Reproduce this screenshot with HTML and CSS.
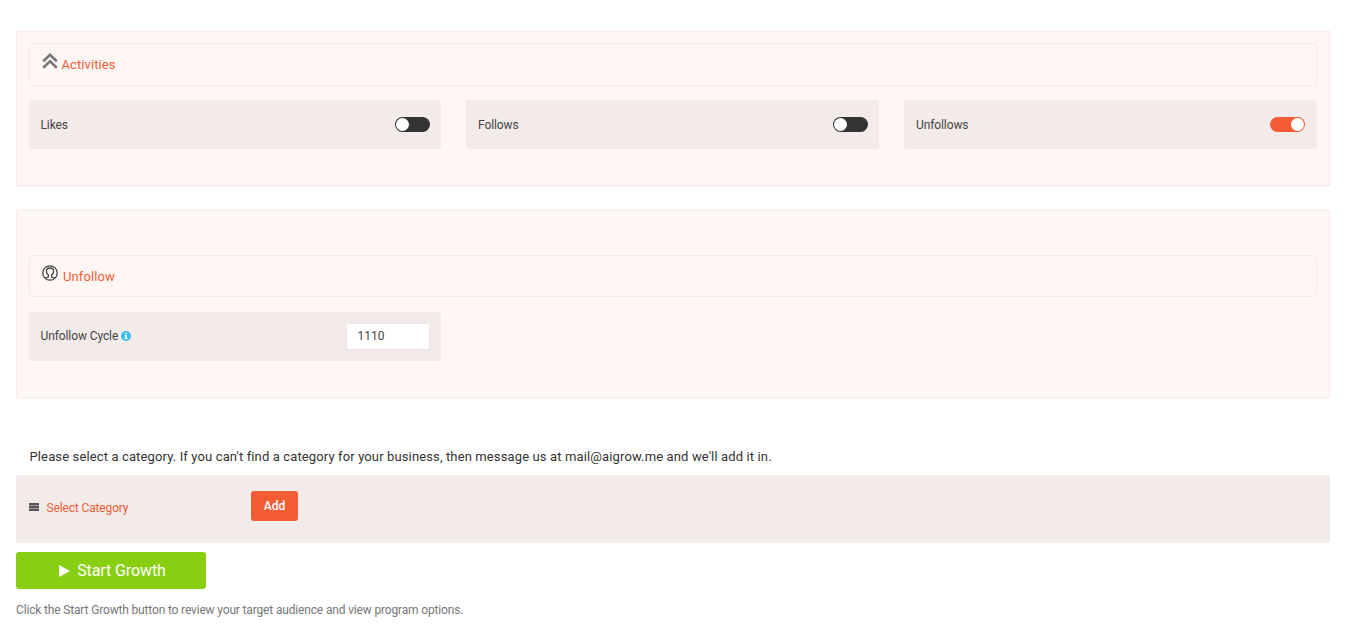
FILE: index.html
```html
<!DOCTYPE html>
<html lang="en">
<head>
<meta charset="utf-8">
<title>Growth settings</title>
<link rel="stylesheet" href="styles.css">
</head>
<body>
<main class="page">
  <section class="panel panel-activities">
    <header class="panel-head head-activities">
      <svg class="head-icon" viewBox="0 0 16 16" width="16" height="16" aria-hidden="true"><path d="M1.200 8.200 8 1.800l6.800 6.400M1.200 14.800 8 8.400l6.800 6.400" fill="none" stroke="#777" stroke-width="2.600"/></svg>
      <span class="head-title">Activities</span>
    </header>
    <div class="grid">
      <div class="item item-first"><span>Likes</span><span class="toggle"></span></div>
      <div class="item"><span>Follows</span><span class="toggle"></span></div>
      <div class="item"><span>Unfollows</span><span class="toggle on"></span></div>
    </div>
  </section>

  <section class="panel panel-unfollow">
    <header class="panel-head head-unfollow">
      <svg class="head-icon" viewBox="0 0 16 16" width="16" height="16" aria-hidden="true"><circle cx="8" cy="8" r="7.200" fill="none" stroke="#444" stroke-width="1.300"/><path d="M3.200 13.200 6.300 12V9.800C5 9 4.400 7.600 4.400 6.300 4.400 4.300 6 3 8 3s3.600 1.300 3.600 3.300c0 1.300-.6 2.700-1.900 3.500V12l3.100 1.200" fill="none" stroke="#444" stroke-width="1.300"/></svg>
      <span class="head-title">Unfollow</span>
    </header>
    <div class="grid">
      <div class="item item-first">
        <span class="label-info">Unfollow Cycle
          <svg viewBox="0 0 10 10" width="10" height="10" aria-hidden="true"><circle cx="5" cy="5" r="5" fill="#35bdec"/><rect x="4.200" y="1.700" width="1.700" height="1.500" fill="#fff"/><path d="M3.500 4h2.400v3.200h.7v1h-3.100v-1h.7V5h-.7z" fill="#fff"/></svg>
        </span>
        <input class="number" type="text" value="1110">
      </div>
    </div>
  </section>

  <p class="prompt">Please select a category. If you can't find a category for your business, then message us at mail@aigrow.me and we'll add it in.</p>
  <div class="category">
    <div class="select">
      <svg viewBox="0 0 10 8" width="10" height="8" aria-hidden="true"><path d="M0 0h10v2.300H0zM0 2.850h10v2.300H0zM0 5.700h10V8H0z" fill="#555"/></svg>
      <span>Select Category</span>
    </div>
    <button class="add" type="button">Add</button>
  </div>
  <button class="start" type="button">
    <svg viewBox="0 0 11 12" width="11" height="12" aria-hidden="true"><path d="M0 0l11 6-11 6z" fill="#fff"/></svg>
    Start Growth
  </button>
  <p class="note">Click the Start Growth button to review your target audience and view program options.</p>
</main>
</body>
</html>
```
FILE: styles.css
```css
* { box-sizing: border-box; }
html, body { margin: 0; background: #fff; }
body { font-family: Roboto, "Liberation Sans", sans-serif; color: #333; overflow: hidden; height: 632px; }
.page { width: 1346px; padding: 31px 16px 0; }
.panel { background: #fff7f5; border: 1px solid #f8e9e6; padding: 11px 12px 0; }
.panel-activities { height: 155px; }
.panel-unfollow { height: 188px; margin-top: 24px; padding-top: 44px; }
.panel-head { display: flex; border: 1px solid #f6e9e6; border-radius: 4px; padding-left: 12px; }
.head-activities { height: 43px; align-items: flex-start; padding-top: 9px; gap: 3.500px; }
.head-unfollow { height: 42px; align-items: flex-start; padding-top: 9px; gap: 5px; }
.head-title { color: #f45c36; font-size: 13px; line-height: 22px; letter-spacing: .1px; margin-top: 1px; }
.head-icon { flex: none; }
.grid { display: grid; grid-template-columns: 412px 413px 413px; column-gap: 25px; margin-top: 14px; }
.panel-unfollow .grid { margin-top: 15px; }
.item { height: 49px; background: #f3ebe9; border-radius: 3px; display: flex; align-items: center; justify-content: space-between; padding: 0 11px 0 12px; font-size: 12px; letter-spacing: -.1px; color: #444; }
.item-first { padding-left: 11.500px; }
.label-info { display: flex; align-items: center; gap: 2.500px; margin-top: -2px; }
.toggle { display: block; position: relative; width: 35px; height: 15px; border-radius: 8px; background: #333; }
.toggle::after { content: ""; position: absolute; left: 1px; top: 1px; width: 13px; height: 13px; border-radius: 50%; background: #fff; }
.toggle.on { background: #f45c36; margin-right: 1px; }
.toggle.on::after { left: 21px; }
.number { width: 84px; height: 27px; background: #fff; border: 1px solid #ebe6e5; border-radius: 3px; padding: 0 10px 0 10.500px; font: 12px Roboto, sans-serif; color: #444; margin-top: -1px; }
.prompt { margin: 50px 0 0 13.500px; font-size: 13px; line-height: 18px; letter-spacing: .13px; color: #333; }
.category { height: 68px; margin-top: 9px; background: #f3ebe9; border-radius: 3px; display: flex; align-items: flex-start; padding: 16px 13px 0; }
.select { width: 222px; display: flex; align-items: center; gap: 7.500px; margin-top: 8px; height: 17px; font-size: 12px; letter-spacing: -.14px; color: #f45c36; }
.select svg { margin-top: -2px; }
.add { width: 47px; height: 30px; background: #f45c36; color: #fff; border: 0; border-radius: 3px; font: 500 12px Roboto, sans-serif; padding: 0; }
.start { display: flex; align-items: center; justify-content: center; gap: 7px; width: 190px; height: 37px; margin-top: 9px; background: #88cf12; color: #fff; border: 0; border-radius: 3px; font: 16px Roboto, sans-serif; letter-spacing: -.1px; padding: 0 0 0 3px; }
.note { margin: 14px 0 0; font-size: 12px; line-height: 15px; letter-spacing: -.16px; color: #777; }
```
